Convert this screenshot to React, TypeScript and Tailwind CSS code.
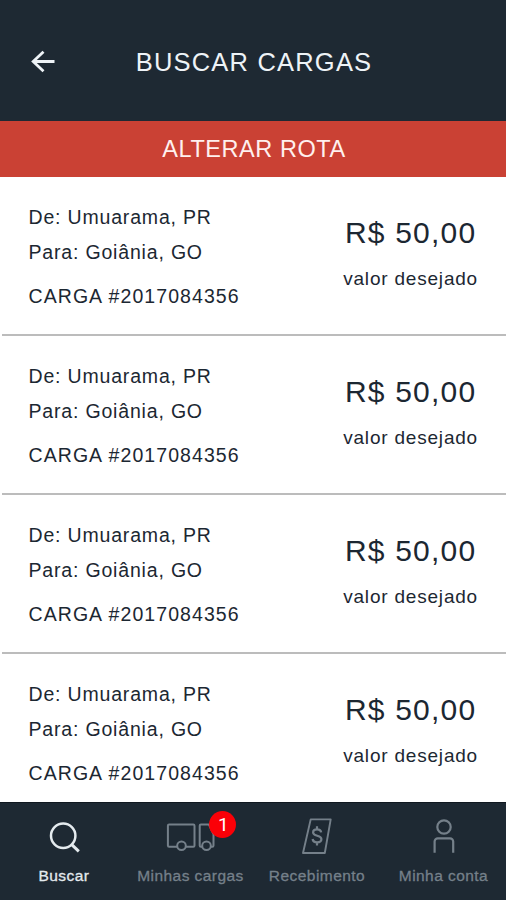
import type { ReactNode } from 'react';

type Carga = {
  id: number;
  origem: string;
  destino: string;
  codigo: string;
  valor: string;
};

const cargas: Carga[] = [1, 2, 3, 4].map((id) => ({
  id,
  origem: 'Umuarama, PR',
  destino: 'Goiânia, GO',
  codigo: '2017084356',
  valor: 'R$ 50,00',
}));

function SearchIcon() {
  return (
    <svg width="34" height="32" viewBox="-1 0 34 32" fill="none" stroke="currentColor" strokeWidth="2.5">
      <circle cx="16.2" cy="14.7" r="12.2" />
      <path d="M24.5 23.3L31.8 30.3" strokeWidth="3" />
    </svg>
  );
}

function TruckIcon() {
  return (
    <svg width="50" height="30" viewBox="0 0 50 30" fill="none" stroke="currentColor" strokeWidth="2">
      <path d="M12 24.7H4.1A1.2 1.2 0 0 1 2.9 23.5V3.7a1.2 1.2 0 0 1 1.2-1.2h24.2a1.2 1.2 0 0 1 1.2 1.2v19.8a1.2 1.2 0 0 1-1.2 1.2H21" />
      <circle cx="16.5" cy="23.7" r="4.3" />
      <path d="M37 24.7h-1.100a1.200 1.200 0 0 1-1.200-1.200V3.700a1.200 1.200 0 0 1 1.200-1.200h8L48.500 12v11.500a1.200 1.200 0 0 1-1.200 1.200H46" />
      <circle cx="41.5" cy="23.7" r="4.3" />
    </svg>
  );
}

function ReceiptIcon() {
  return (
    <svg width="31" height="38" viewBox="0 0 31 38" fill="none" stroke="currentColor" strokeWidth="1.9">
      <path d="M9.7 1.4h20L23.800 35H2L9.700 1.400z" strokeLinejoin="round" />
      <path d="M20.200 14.300c-.3-1.900-1.900-3-4.100-3-2.400 0-4 1.200-4 3.100 0 4.200 8.300 2.400 8.300 6.700 0 2-1.800 3.300-4.300 3.300s-4.200-1.300-4.500-3.400M16 8.200v3M16 24.300v3.200" strokeWidth="2.200" />
    </svg>
  );
}

function UserIcon() {
  return (
    <svg width="24" height="36" viewBox="0 0 24 36" fill="none" stroke="currentColor" strokeWidth="2.2">
      <circle cx="13" cy="8" r="6.7" />
      <path d="M3.6 33.8V22.600a3.200 3.200 0 0 1 3.200-3.200H19a3.200 3.200 0 0 1 3.200 3.200v11.200" />
    </svg>
  );
}

type NavItemProps = {
  label: string;
  icon: ReactNode;
  isActive?: boolean;
  badge?: number;
};

function NavItem({ label, icon, isActive = false, badge }: NavItemProps) {
  return (
    <button
      className={`flex flex-col items-center pt-3.5 ${isActive ? 'text-[#e4eaee]' : 'text-[#75808a]'}`}
    >
      <span className="relative flex h-10 items-center justify-center">
        {icon}
        {badge && (
          <span className="absolute -top-[6px] left-[44px] flex size-[27px] items-center justify-center rounded-full bg-[#fb0007] pl-0.5 font-[Roboto,sans-serif] text-[19px] leading-none text-white">
            {badge}
          </span>
        )}
      </span>
      <span className="mt-[9px] pl-[1.5px] text-[15.5px] leading-5 tracking-[0.45px] whitespace-nowrap [-webkit-text-stroke:0.3px]">
        {label}
      </span>
    </button>
  );
}

function CargaItem({ carga }: { carga: Carga }) {
  return (
    <li className="ml-0.5 flex h-[159px] shrink-0 justify-between border-b-2 border-[#bcbcbc] pl-[26.5px]">
      <div className="pt-[23px] text-[19.5px] leading-[35px] tracking-[0.82px]">
        <p>De: {carga.origem}</p>
        <p>Para: {carga.destino}</p>
        <p className="mt-[9px] tracking-[1.07px]">CARGA #{carga.codigo}</p>
      </div>
      <div className="mr-7 pt-[38px] text-center leading-9">
        <p className="text-[30px] tracking-[1.2px]">{carga.valor}</p>
        <p className="mt-2.5 text-[19px] tracking-[0.8px]">valor desejado</p>
      </div>
    </li>
  );
}

export default function App() {
  return (
    <div className="flex h-[900px] w-[506px] flex-col overflow-hidden bg-white font-['Liberation_Sans',Arial,sans-serif] text-[#1c2732]">
      <header className="grid h-[121px] shrink-0 grid-cols-[86px_1fr_86px] items-center bg-[#1e2933] pt-0.5 text-[#eef3f7]">
        <button aria-label="Voltar" className="flex justify-center">
          <svg width="24" height="24" viewBox="0 0 24 24" fill="none" stroke="currentColor" strokeWidth="2.8">
            <path d="M12.5 1.8L2.2 11.500l10.300 9.700M2.200 11.500H23.500" />
          </svg>
        </button>
        <h1 className="pt-px pl-[2px] text-center text-[25.5px] tracking-[1.2px]">BUSCAR CARGAS</h1>
      </header>

      <button className="h-14 shrink-0 bg-[#ca4134] pt-px pl-[2px] text-[23.5px] tracking-[0.55px] text-[#fff0ee]">
        ALTERAR ROTA
      </button>

      <ul className="flex min-h-0 flex-1 flex-col overflow-hidden">
        {cargas.map((carga) => (
          <CargaItem key={carga.id} carga={carga} />
        ))}
      </ul>

      <nav className="grid h-[98px] shrink-0 grid-cols-4 items-start border-t border-[#101820] bg-[#1e2933]">
        <NavItem label="Buscar" icon={<SearchIcon />} isActive />
        <NavItem label="Minhas cargas" icon={<TruckIcon />} badge={1} />
        <NavItem label="Recebimento" icon={<ReceiptIcon />} />
        <NavItem label="Minha conta" icon={<UserIcon />} />
      </nav>
    </div>
  );
}
